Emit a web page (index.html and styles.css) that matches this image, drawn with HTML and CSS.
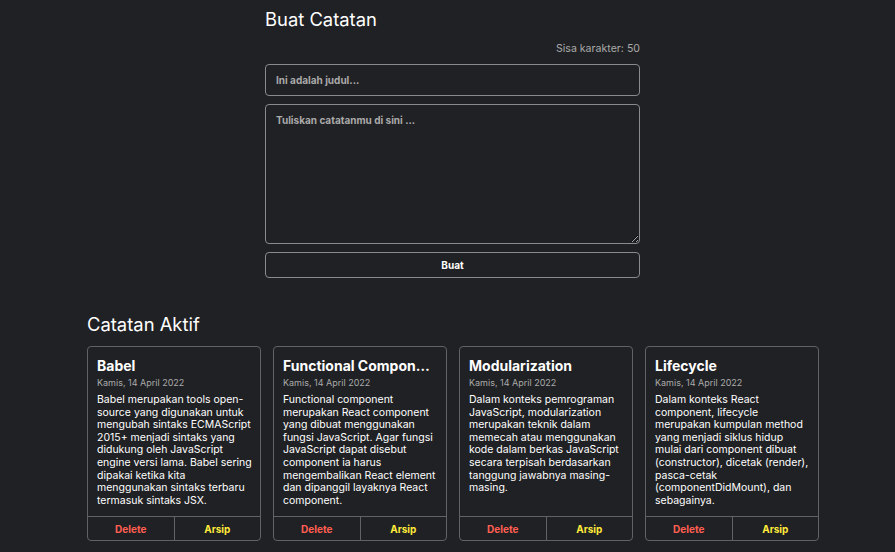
FILE: index.html
```html
<!DOCTYPE html>
<html lang="id">
<head>
<meta charset="utf-8">
<title>Catatan</title>
<link rel="stylesheet" href="styles.css">
</head>
<body>
<main class="app-body">
  <section class="note-input">
    <h2 class="note-input__title">Buat Catatan</h2>
    <p class="note-input__limit">Sisa karakter: 50</p>
    <form class="note-input__form">
      <input class="note-input__field" type="text" placeholder="Ini adalah judul...">
      <textarea class="note-input__body" placeholder="Tuliskan catatanmu di sini ..."></textarea>
      <button class="note-input__submit" type="button">Buat</button>
    </form>
  </section>
  <h2 class="section-title">Catatan Aktif</h2>
  <div class="notes-list">
    <article class="note-item">
      <div class="note-item__content">
        <h3 class="note-item__title">Babel</h3>
        <p class="note-item__date">Kamis, 14 April 2022</p>
        <p class="note-item__body">Babel merupakan tools open-source yang digunakan untuk mengubah sintaks ECMAScript 2015+ menjadi sintaks yang didukung oleh JavaScript engine versi lama. Babel sering dipakai ketika kita menggunakan sintaks terbaru termasuk sintaks JSX.</p>
      </div>
      <div class="note-item__action">
        <button class="note-item__btn note-item__btn--delete">Delete</button>
        <button class="note-item__btn note-item__btn--archive">Arsip</button>
      </div>
    </article>
    <article class="note-item">
      <div class="note-item__content">
        <h3 class="note-item__title">Functional Component</h3>
        <p class="note-item__date">Kamis, 14 April 2022</p>
        <p class="note-item__body">Functional component merupakan React component yang dibuat menggunakan fungsi JavaScript. Agar fungsi JavaScript dapat disebut component ia harus mengembalikan React element dan dipanggil layaknya React component.</p>
      </div>
      <div class="note-item__action">
        <button class="note-item__btn note-item__btn--delete">Delete</button>
        <button class="note-item__btn note-item__btn--archive">Arsip</button>
      </div>
    </article>
    <article class="note-item">
      <div class="note-item__content">
        <h3 class="note-item__title">Modularization</h3>
        <p class="note-item__date">Kamis, 14 April 2022</p>
        <p class="note-item__body">Dalam konteks pemrograman JavaScript, modularization merupakan teknik dalam memecah atau menggunakan kode dalam berkas JavaScript secara terpisah berdasarkan tanggung jawabnya masing-masing.</p>
      </div>
      <div class="note-item__action">
        <button class="note-item__btn note-item__btn--delete">Delete</button>
        <button class="note-item__btn note-item__btn--archive">Arsip</button>
      </div>
    </article>
    <article class="note-item">
      <div class="note-item__content">
        <h3 class="note-item__title">Lifecycle</h3>
        <p class="note-item__date">Kamis, 14 April 2022</p>
        <p class="note-item__body">Dalam konteks React component, lifecycle merupakan kumpulan method yang menjadi siklus hidup mulai dari component dibuat (constructor), dicetak (render), pasca-cetak (componentDidMount), dan sebagainya.</p>
      </div>
      <div class="note-item__action">
        <button class="note-item__btn note-item__btn--delete">Delete</button>
        <button class="note-item__btn note-item__btn--archive">Arsip</button>
      </div>
    </article>
  </div>
</main>
</body>
</html>
```
FILE: styles.css
```css
* { box-sizing: border-box; }
html, body { margin: 0; padding: 0; }
body {
  background: #202124;
  color: #ffffff;
  font-family: Inter, "Noto Sans", "DejaVu Sans", sans-serif;
  height: 552px;
  overflow: hidden;
}
.app-body {
  width: 732px;
  margin-left: 87px;
  padding-top: 7px;
}
.note-input {
  width: 375px;
  margin-left: 178px;
}
.note-input__title {
  margin: 0;
  font-size: 18.4px;
  font-weight: 400;
  line-height: 24px;
}
.note-input__limit {
  margin: 11px 0 8px;
  text-align: right;
  font-size: 10.6px;
  line-height: 14px;
  color: #aaaaaa;
}
.note-input__form {
  display: flex;
  flex-direction: column;
  gap: 8px;
}
.note-input__field,
.note-input__body,
.note-input__submit {
  width: 100%;
  background: transparent;
  border: 1px solid #8a8a8e;
  border-radius: 4px;
  color: #fff;
  font-family: inherit;
  font-size: 10px;
  font-weight: 700;
}
.note-input__field {
  height: 32px;
  padding: 0 10px;
}
.note-input__body {
  height: 140px;
  padding: 9px 10px;
  resize: vertical;
  display: block;
}
.note-input__field::placeholder,
.note-input__body::placeholder {
  color: #aaaaaa;
  opacity: 1;
}
.note-input__submit {
  height: 26px;
  font-size: 10px;
}
.section-title {
  margin: 34px 0 10px;
  font-size: 18.4px;
  font-weight: 400;
  line-height: 24px;
}
.notes-list {
  display: grid;
  grid-template-columns: repeat(4, 174px);
  gap: 12px;
}
.note-item {
  border: 1px solid #5f6368;
  border-radius: 4px;
  height: 195px;
  display: flex;
  flex-direction: column;
}
.note-item__content {
  flex: 1;
  padding: 10px 7px 0 9px;
  overflow: hidden;
}
.note-item__title {
  margin: 0;
  padding-right: 2px;
  font-size: 14px;
  font-weight: 700;
  line-height: 18px;
  white-space: nowrap;
  overflow: hidden;
  text-overflow: ellipsis;
}
.note-item__date {
  margin: 1px 0 5px;
  font-size: 9px;
  line-height: 13px;
  color: #aaaaaa;
}
.note-item__body {
  margin: 0;
  font-size: 10.5px;
  line-height: 12.6px;
  color: #ffffff;
}
.note-item__action {
  display: flex;
  border-top: 1px solid #5f6368;
  height: 24px;
}
.note-item__btn {
  flex: 1;
  background: transparent;
  border: none;
  font-family: inherit;
  font-size: 10px;
  font-weight: 700;
  cursor: pointer;
}
.note-item__btn + .note-item__btn {
  border-left: 1px solid #5f6368;
}
.note-item__btn--delete { color: #ff5f52; }
.note-item__btn--archive { color: #ffeb3b; }
```
